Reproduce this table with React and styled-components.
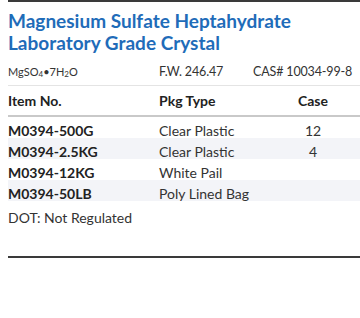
import React from 'react';
import styled, { createGlobalStyle } from 'styled-components';

const GlobalStyle = createGlobalStyle`
  html, body {
    margin: 0;
    padding: 0;
    background: #ffffff;
  }
  body {
    font-family: Lato, "Open Sans", "Liberation Sans", sans-serif;
    color: #222222;
  }
`;

const rows = [
    { item: 'M0394-500G', pkg: 'Clear Plastic', qty: '12' },
    { item: 'M0394-2.5KG', pkg: 'Clear Plastic', qty: '4' },
    { item: 'M0394-12KG', pkg: 'White Pail', qty: '' },
    { item: 'M0394-50LB', pkg: 'Poly Lined Bag', qty: '' },
];

function App() {
    return (
        <>
            <GlobalStyle />
            <Sheet>
                <Rule />
                <Title>
                    Magnesium Sulfate Heptahydrate
                    <br />
                    Laboratory Grade Crystal
                </Title>

                <MetaRow>
                    <Formula>
                        MgSO<Sub>4</Sub>•7H<Sub>2</Sub>O
                    </Formula>
                    <Meta>F.W. 246.47</Meta>
                    <Meta>CAS# 10034-99-8</Meta>
                </MetaRow>

                <HeadRow>
                    <HeadCell>Item No.</HeadCell>
                    <HeadCell>Pkg Type</HeadCell>
                    <HeadCell $center>Case</HeadCell>
                </HeadRow>

                {rows.map((row, i) => (
                    <Row key={row.item} $shaded={i % 2 === 1}>
                        <ItemCell>{row.item}</ItemCell>
                        <Cell>{row.pkg}</Cell>
                        <Cell $center>{row.qty}</Cell>
                    </Row>
                ))}

                <Note>DOT: Not Regulated</Note>
                <Rule />
            </Sheet>
        </>
    );
}

export default App;

const Sheet = styled.div`
  padding-left: 8px;
`;

const Rule = styled.div`
  height: 2px;
  background: #3a3a3a;
`;

const Title = styled.h1`
  margin: 8px 0 4px;
  font-size: 19px;
  line-height: 22px;
  font-weight: 700;
  color: #1f6cb9;
`;

const MetaRow = styled.div`
  display: grid;
  grid-template-columns: 151px 94px 1fr;
  align-items: center;
  height: 27px;
  border-bottom: 1px solid #e4e4e4;
`;

const Formula = styled.span`
  font-size: 11px;
  color: #333333;
`;

const Sub = styled.sub`
  font-size: 8px;
  vertical-align: -1px;
`;

const Meta = styled.span`
  font-size: 12.5px;
  letter-spacing: -0.15px;
  color: #333333;
`;

const HeadRow = styled.div`
  display: grid;
  grid-template-columns: 151px 124px 60px 1fr;
  align-items: center;
  height: 29px;
  border-bottom: 2px solid #c9c9c9;
`;

const HeadCell = styled.div`
  font-size: 14px;
  font-weight: 700;
  color: #222222;
  text-align: ${p => (p.$center ? 'center' : 'left')};
`;

const Row = styled.div`
  display: grid;
  grid-template-columns: 151px 124px 60px 1fr;
  align-items: start;
  box-sizing: border-box;
  height: 21px;
  padding-top: 5px;
  background: ${p => (p.$shaded ? '#f3f4f8' : 'transparent')};
`;

const ItemCell = styled.div`
  font-size: 14px;
  line-height: 17px;
  font-weight: 700;
  color: #222222;
`;

const Cell = styled.div`
  font-size: 14px;
  line-height: 17px;
  color: #333333;
  text-align: ${p => (p.$center ? 'center' : 'left')};
`;

const Note = styled.div`
  font-size: 14px;
  color: #333333;
  height: 55px;
  padding-top: 8px;
  box-sizing: border-box;
`;
